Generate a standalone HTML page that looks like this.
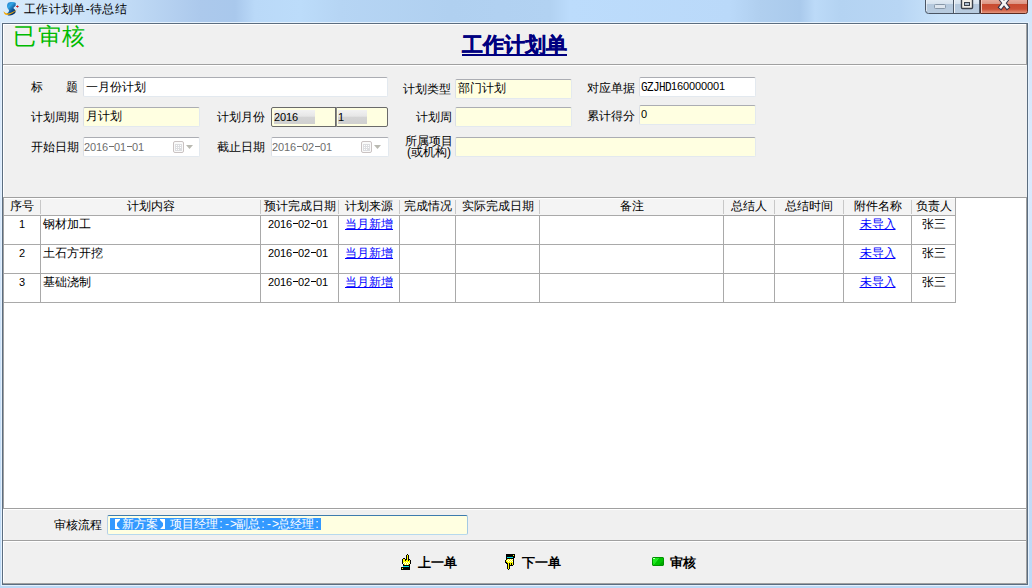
<!DOCTYPE html>
<html><head><meta charset="utf-8">
<style>
*{margin:0;padding:0;box-sizing:border-box}
html,body{width:1032px;height:588px;overflow:hidden}
body{position:relative;background:linear-gradient(#d4e6f9,#dbeafd 30%,#c6def7 70%,#bcd9f6);font-family:"Liberation Sans",sans-serif;font-size:12px;color:#000}
.a{position:absolute}
.t{position:absolute;white-space:nowrap;line-height:12px;font-size:12px}
.m{font-family:"Liberation Mono",monospace;font-size:11px;letter-spacing:-0.6px;transform:scaleY(1.2);transform-origin:0 0}
.tb{position:absolute;border:1px solid;border-color:#abadb3 #e3e9ef #e3e9ef #dbdfe6;border-radius:2px;background:#fff;box-shadow:inset 0 0 0 1px #fff}
.y{background:#ffffe1;box-shadow:none}
.hl{position:absolute;height:1px}
.vl{position:absolute;width:1px}
.n{font-size:11px}
.dg{display:inline-block;width:6px;text-align:center;font-family:"Liberation Sans",sans-serif;font-size:11px}
.lt{display:inline-block;width:6px;text-align:center;font-family:"Liberation Mono",monospace;font-size:11px;transform:scaleY(1.15);transform-origin:50% 2px}
.hy{display:inline-block;width:6px;height:12px;position:relative;vertical-align:top}
.hy::after{content:"";position:absolute;left:1px;top:5px;width:5px;height:1px;background:currentColor}
.hw{display:inline-block;width:6px;text-align:center}
.fw{display:inline-block;width:12px;text-align:center}
.lk{color:#0000ff;text-decoration:underline}
</style></head><body>
<!-- title bar -->
<div class="a" style="left:0;top:0;width:1032px;height:22px;background:linear-gradient(90deg,#d8ebfb 0px,#d2e7fa 60px,#c0daf5 130px,#acc9ec 200px,#a9c8ec 235px,#bad9f8 255px,#bcdcfa 300px,#b6d5f4 340px,#b0d0f0 450px,#b2d2f2 550px,#bcdcfc 570px,#bad9f9 730px,#b0cfef 760px,#aacaec 800px,#bcdaf8 815px,#b4d3f2 840px,#b8d6f4 900px,#c8e2fa 940px,#d2e7fb 1032px)"></div>
<div class="t" style="left:24px;top:3px;font-size:12px;letter-spacing:0.35px">工作计划单-待总结</div>
<!-- frame -->
<div class="vl" style="left:1px;top:22px;height:564px;background:#e4f1fd"></div>
<div class="hl" style="left:1px;top:22px;width:1028px;background:#e4f1fd"></div>
<div class="vl" style="left:1028px;top:22px;height:564px;background:#e4f1fd"></div>
<div class="hl" style="left:1px;top:585px;width:1028px;background:#e4f1fd"></div>
<div class="a" style="left:2px;top:23px;width:1026px;height:562px;border:1px solid #5b6d80;background:#f0f0f0"></div>

<!-- panel 1 -->
<div class="hl" style="left:3px;top:24px;width:1023px;background:#fff"></div>
<div class="vl" style="left:3px;top:24px;height:40px;background:#fff"></div>
<div class="hl" style="left:3px;top:64px;width:1024px;background:#a0a0a0"></div>
<div class="vl" style="left:1026px;top:24px;height:40px;background:#a0a0a0"></div>
<div class="t" style="left:13px;top:25px;font-size:23px;line-height:23px;letter-spacing:1.5px;color:#00bb00;font-weight:300">已审核</div>
<div class="t" style="left:462px;top:34px;font-size:21px;line-height:21px;color:#000080;font-weight:bold;text-decoration:underline;-webkit-text-stroke:0.4px #000080">工作计划单</div>

<!-- panel 2 : form -->
<div class="hl" style="left:3px;top:65px;width:1023px;background:#fff"></div>
<div class="vl" style="left:3px;top:65px;height:132px;background:#fff"></div>

<div class="t" style="left:31px;top:81px">标</div>
<div class="t" style="left:66px;top:81px">题</div>
<div class="tb" style="left:83px;top:77px;width:305px;height:20px"></div>
<div class="t" style="left:86px;top:81px">一月份计划</div>

<div class="t" style="left:403px;top:83px">计划类型</div>
<div class="tb y" style="left:455px;top:79px;width:117px;height:20px"></div>
<div class="t" style="left:458px;top:82px">部门计划</div>

<div class="t" style="left:587px;top:82px">对应单据</div>
<div class="tb" style="left:639px;top:77px;width:117px;height:20px"></div>
<div class="t n" style="left:641px;top:80px"><span class="lt">G</span><span class="lt">Z</span><span class="lt">J</span><span class="lt">H</span><span class="lt">D</span><span class="dg">1</span><span class="dg">6</span><span class="dg">0</span><span class="dg">0</span><span class="dg">0</span><span class="dg">0</span><span class="dg">0</span><span class="dg">0</span><span class="dg">1</span></div>

<div class="t" style="left:31px;top:111px">计划周期</div>
<div class="tb y" style="left:83px;top:107px;width:117px;height:20px"></div>
<div class="t" style="left:86px;top:110px">月计划</div>

<div class="t" style="left:217px;top:111px">计划月份</div>
<div class="a" style="left:271px;top:107px;width:117px;height:20px;border:1px solid #6a6a6a;background:#ffffe1;border-radius:2px"></div>
<div class="a" style="left:335px;top:107px;width:2px;height:20px;border-left:1px solid #6a6a6a;border-right:1px solid #8a8a8a"></div>
<div class="a" style="left:274px;top:110px;width:41px;height:14px;background:linear-gradient(#f2f2f2 0,#e6e6e6 45%,#d4d4d4 50%,#d0d0d0 100%)"></div>
<div class="a" style="left:338px;top:110px;width:29px;height:14px;background:linear-gradient(#f2f2f2 0,#e6e6e6 45%,#d4d4d4 50%,#d0d0d0 100%)"></div>
<div class="t n" style="left:274px;top:111px"><span class="dg">2</span><span class="dg">0</span><span class="dg">1</span><span class="dg">6</span></div>
<div class="t n" style="left:338px;top:111px"><span class="dg">1</span></div>

<div class="t" style="left:416px;top:111px">计划周</div>
<div class="tb y" style="left:455px;top:107px;width:117px;height:20px"></div>

<div class="t" style="left:587px;top:110px">累计得分</div>
<div class="tb y" style="left:639px;top:105px;width:117px;height:20px"></div>
<div class="t n" style="left:641px;top:108px"><span class="dg">0</span></div>

<div class="t" style="left:31px;top:141px">开始日期</div>
<div class="tb" style="left:83px;top:137px;width:117px;height:20px"></div>
<div class="t n" style="left:84px;top:141px;color:#6e6e6e"><span class="dg">2</span><span class="dg">0</span><span class="dg">1</span><span class="dg">6</span><span class="hy"></span><span class="dg">0</span><span class="dg">1</span><span class="hy"></span><span class="dg">0</span><span class="dg">1</span></div>

<div class="t" style="left:217px;top:141px">截止日期</div>
<div class="tb" style="left:271px;top:137px;width:118px;height:20px"></div>
<div class="t n" style="left:272px;top:141px;color:#6e6e6e"><span class="dg">2</span><span class="dg">0</span><span class="dg">1</span><span class="dg">6</span><span class="hy"></span><span class="dg">0</span><span class="dg">2</span><span class="hy"></span><span class="dg">0</span><span class="dg">1</span></div>

<div class="t" style="left:405px;top:136px;line-height:11px">所属项目</div>
<div class="t" style="left:405px;top:147px;line-height:11px"><span class="hw" style="text-align:right">(</span>或机构<span class="hw" style="text-align:left">)</span></div>
<div class="tb y" style="left:455px;top:137px;width:301px;height:20px"></div>

<!-- table area -->
<div class="hl" style="left:3px;top:197px;width:1024px;background:#a0a0a0"></div>
<div class="vl" style="left:3px;top:197px;height:312px;background:#a0a0a0"></div>
<div class="a" style="left:4px;top:198px;width:1022px;height:310px;background:#fff"></div>
<div class="hl" style="left:3px;top:508px;width:1024px;background:#a0a0a0"></div>

<!-- table -->
<div class="a" style="left:4px;top:199px;width:951px;height:16px;background:#f4f4f4"></div>
<div class="hl" style="left:4px;top:215px;width:952px;background:#a9a9a9"></div>
<div class="vl" style="left:40px;top:200px;height:14px;background:#c8c8c8"></div>
<div class="vl" style="left:40px;top:215px;height:87px;background:#a9a9a9"></div>
<div class="vl" style="left:260px;top:200px;height:14px;background:#c8c8c8"></div>
<div class="vl" style="left:260px;top:215px;height:87px;background:#a9a9a9"></div>
<div class="vl" style="left:338px;top:200px;height:14px;background:#c8c8c8"></div>
<div class="vl" style="left:338px;top:215px;height:87px;background:#a9a9a9"></div>
<div class="vl" style="left:399px;top:200px;height:14px;background:#c8c8c8"></div>
<div class="vl" style="left:399px;top:215px;height:87px;background:#a9a9a9"></div>
<div class="vl" style="left:455px;top:200px;height:14px;background:#c8c8c8"></div>
<div class="vl" style="left:455px;top:215px;height:87px;background:#a9a9a9"></div>
<div class="vl" style="left:539px;top:200px;height:14px;background:#c8c8c8"></div>
<div class="vl" style="left:539px;top:215px;height:87px;background:#a9a9a9"></div>
<div class="vl" style="left:723px;top:200px;height:14px;background:#c8c8c8"></div>
<div class="vl" style="left:723px;top:215px;height:87px;background:#a9a9a9"></div>
<div class="vl" style="left:774px;top:200px;height:14px;background:#c8c8c8"></div>
<div class="vl" style="left:774px;top:215px;height:87px;background:#a9a9a9"></div>
<div class="vl" style="left:843px;top:200px;height:14px;background:#c8c8c8"></div>
<div class="vl" style="left:843px;top:215px;height:87px;background:#a9a9a9"></div>
<div class="vl" style="left:911px;top:200px;height:14px;background:#c8c8c8"></div>
<div class="vl" style="left:911px;top:215px;height:87px;background:#a9a9a9"></div>
<div class="vl" style="left:955px;top:198px;height:105px;background:#a9a9a9"></div>
<div class="hl" style="left:4px;top:244px;width:952px;background:#a9a9a9"></div>
<div class="hl" style="left:4px;top:273px;width:952px;background:#a9a9a9"></div>
<div class="hl" style="left:4px;top:302px;width:952px;background:#a9a9a9"></div>
<div class="t" style="left:4px;top:200px;width:36px;text-align:center">序号</div>
<div class="t" style="left:41px;top:200px;width:219px;text-align:center">计划内容</div>
<div class="t" style="left:261px;top:200px;width:77px;text-align:center">预计完成日期</div>
<div class="t" style="left:339px;top:200px;width:60px;text-align:center">计划来源</div>
<div class="t" style="left:400px;top:200px;width:55px;text-align:center">完成情况</div>
<div class="t" style="left:456px;top:200px;width:83px;text-align:center">实际完成日期</div>
<div class="t" style="left:540px;top:200px;width:183px;text-align:center">备注</div>
<div class="t" style="left:724px;top:200px;width:50px;text-align:center">总结人</div>
<div class="t" style="left:775px;top:200px;width:68px;text-align:center">总结时间</div>
<div class="t" style="left:844px;top:200px;width:67px;text-align:center">附件名称</div>
<div class="t" style="left:912px;top:200px;width:43px;text-align:center">负责人</div>
<div class="t n" style="left:19px;top:218px"><span class="dg">1</span></div>
<div class="t" style="left:43px;top:218px">钢材加工</div>
<div class="t n" style="left:268px;top:218px"><span class="dg">2</span><span class="dg">0</span><span class="dg">1</span><span class="dg">6</span><span class="hy"></span><span class="dg">0</span><span class="dg">2</span><span class="hy"></span><span class="dg">0</span><span class="dg">1</span></div>
<div class="t lk" style="left:339px;top:218px;width:60px;text-align:center">当月新增</div>
<div class="t lk" style="left:844px;top:218px;width:67px;text-align:center">未导入</div>
<div class="t" style="left:912px;top:218px;width:43px;text-align:center">张三</div>
<div class="t n" style="left:19px;top:247px"><span class="dg">2</span></div>
<div class="t" style="left:43px;top:247px">土石方开挖</div>
<div class="t n" style="left:268px;top:247px"><span class="dg">2</span><span class="dg">0</span><span class="dg">1</span><span class="dg">6</span><span class="hy"></span><span class="dg">0</span><span class="dg">2</span><span class="hy"></span><span class="dg">0</span><span class="dg">1</span></div>
<div class="t lk" style="left:339px;top:247px;width:60px;text-align:center">当月新增</div>
<div class="t lk" style="left:844px;top:247px;width:67px;text-align:center">未导入</div>
<div class="t" style="left:912px;top:247px;width:43px;text-align:center">张三</div>
<div class="t n" style="left:19px;top:276px"><span class="dg">3</span></div>
<div class="t" style="left:43px;top:276px">基础浇制</div>
<div class="t n" style="left:268px;top:276px"><span class="dg">2</span><span class="dg">0</span><span class="dg">1</span><span class="dg">6</span><span class="hy"></span><span class="dg">0</span><span class="dg">2</span><span class="hy"></span><span class="dg">0</span><span class="dg">1</span></div>
<div class="t lk" style="left:339px;top:276px;width:60px;text-align:center">当月新增</div>
<div class="t lk" style="left:844px;top:276px;width:67px;text-align:center">未导入</div>
<div class="t" style="left:912px;top:276px;width:43px;text-align:center">张三</div>

<!-- panel 4 -->
<div class="hl" style="left:3px;top:509px;width:1023px;background:#fff"></div>
<div class="vl" style="left:3px;top:509px;height:31px;background:#fff"></div>
<div class="hl" style="left:3px;top:540px;width:1024px;background:#a0a0a0"></div>
<div class="t" style="left:54px;top:519px">审核流程</div>
<div class="a" style="left:107px;top:515px;width:361px;height:20px;border:1px solid;border-color:#3d7bad #a4c9e3 #b7d9ed #b5cfe7;border-radius:2px;background:#ffffe1"></div>
<div class="a" style="left:110px;top:518px;width:211px;height:12px;background:#3399ff"></div>
<div class="t" style="left:110px;top:518px;color:#fff"><span class="fw"></span><span class="fw">新</span><span class="fw">方</span><span class="fw">案</span><span class="fw"></span><span class="fw">项</span><span class="fw">目</span><span class="fw">经</span><span class="fw">理</span><span class="hw">:</span><span class="hw">-</span><span class="hw">></span><span class="fw">副</span><span class="fw">总</span><span class="hw">:</span><span class="hw">-</span><span class="hw">></span><span class="fw">总</span><span class="fw">经</span><span class="fw">理</span><span class="hw">:</span></div>

<svg class="a" style="left:110px;top:518px" width="60" height="12" viewBox="0 0 60 12"><path d="M5 1 H10 V2 L7 5 V8 L10 11 H5 Z" fill="#fff"/><path d="M55 1 H50 V2 L53 5 V8 L50 11 H55 Z" fill="#fff"/></svg>
<!-- panel 5 -->
<div class="vl" style="left:1026px;top:197px;height:387px;background:#a0a0a0"></div>
<div class="hl" style="left:3px;top:583px;width:1024px;background:#a0a0a0"></div>
<div class="hl" style="left:3px;top:541px;width:1023px;background:#fff"></div>
<div class="vl" style="left:3px;top:541px;height:41px;background:#fff"></div>
<div class="t" style="left:418px;top:556px;font-weight:bold;font-size:13px;line-height:13px">上一单</div>
<div class="t" style="left:522px;top:556px;font-weight:bold;font-size:13px;line-height:13px">下一单</div>
<div class="t" style="left:670px;top:556px;font-weight:bold;font-size:13px;line-height:13px">审核</div>

<!-- title icon -->
<svg class="a" style="left:0px;top:0px" width="22" height="18" viewBox="0 0 22 18">
<defs><linearGradient id="sg" x1="0" y1="0" x2="0.7" y2="1"><stop offset="0" stop-color="#1a70c0"/><stop offset="0.35" stop-color="#34a8e8"/><stop offset="0.7" stop-color="#0c4f92"/><stop offset="1" stop-color="#062a5a"/></linearGradient></defs>
<path d="M8 3 C10 1.5 14 1.6 15.8 3 L15.6 5.8 C14.6 6.8 13.6 7.4 13.4 8.2 C14.6 9 15.8 10 15.6 12 C15 14.5 11 15.8 8 15.5 L6.6 13.6 C8 12.8 9.2 11.6 9 10.2 C8.2 9.2 7 8.2 7 6.6 C7 5 7.3 3.8 8 3 Z" fill="url(#sg)"/>
<path d="M3.6 11 C3.8 13.6 5 15.2 7.6 15 C11 14.6 14.6 12.2 17.4 9 C14.2 11.6 11 13.1 8 13.4 C6 13.6 4.6 12.8 3.6 11 Z" fill="#f6a800"/>
<path d="M17.4 5 L18.2 6.5 L17.4 8 L16.6 6.5 Z" fill="#c81818"/>
<rect x="16.2" y="6" width="2.4" height="1" fill="#c81818"/>
</svg>
<!-- caption buttons -->
<svg class="a" style="left:925px;top:0px" width="104" height="15" viewBox="0 0 104 15">
<defs>
<linearGradient id="bg1" x1="0" y1="0" x2="0" y2="1"><stop offset="0" stop-color="#e3ecf5"/><stop offset="0.33" stop-color="#d6e2ee"/><stop offset="0.34" stop-color="#b5c8dc"/><stop offset="1" stop-color="#b8cce0"/></linearGradient>
<linearGradient id="bg2" x1="0" y1="0" x2="0" y2="1"><stop offset="0" stop-color="#eab0a2"/><stop offset="0.33" stop-color="#dc9684"/><stop offset="0.36" stop-color="#c84a30"/><stop offset="0.7" stop-color="#cc5238"/><stop offset="1" stop-color="#e8a088"/></linearGradient>
</defs>
<path d="M0.5 -1 L0.5 10.5 Q0.5 13.5 3.5 13.5 L28.5 13.5 L28.5 -1 Z" fill="url(#bg1)" stroke="#4a5564" stroke-width="1"/>
<rect x="28.5" y="-1" width="26" height="14.5" fill="url(#bg1)" stroke="#4a5564" stroke-width="1"/>
<path d="M55.5 -1 L55.5 13.5 L100.5 13.5 Q102.5 13.5 102.5 11.5 L102.5 -1 Z" fill="url(#bg2)" stroke="#5a2a20" stroke-width="1"/>
<line x1="29.5" y1="0" x2="29.5" y2="13" stroke="#f0f4f8" stroke-width="1"/>
<line x1="1.5" y1="0" x2="1.5" y2="11" stroke="#eef3f8" stroke-width="1" opacity="0.7"/>
<line x1="56.5" y1="0" x2="56.5" y2="13" stroke="#f4c8bc" stroke-width="1"/>
<rect x="9.5" y="4.5" width="11" height="4" rx="1" fill="#dde5ee" stroke="#8797a8" stroke-width="1"/>
<rect x="36.5" y="-1" width="11" height="9.5" rx="1" fill="#f2f0ea" stroke="#3a414c" stroke-width="1.4"/>
<rect x="39.5" y="2.5" width="5" height="3" fill="#aebfd0" stroke="#3a414c" stroke-width="1"/>
<g stroke-linecap="square"><path d="M75.8 -1 L82.2 7.2 M82.2 -1 L75.8 7.2" stroke="#34344a" stroke-width="4.6"/><path d="M75.8 -1 L82.2 7.2 M82.2 -1 L75.8 7.2" stroke="#f6f6f6" stroke-width="2.6"/></g>
</svg>
<!-- calendar icons -->
<svg class="a" style="left:173px;top:141px" width="21" height="12" viewBox="0 0 21 12">
<rect x="0.5" y="0.5" width="10" height="11" rx="1.5" fill="#fafafa" stroke="#c9c2c2"/>
<rect x="2" y="3" width="7" height="7" fill="#dcdde0"/>
<g fill="#fff"><rect x="3" y="4" width="1" height="1"/><rect x="5" y="4" width="1" height="1"/><rect x="7" y="4" width="1" height="1"/><rect x="3" y="6" width="1" height="1"/><rect x="5" y="6" width="1" height="1"/><rect x="7" y="6" width="1" height="1"/><rect x="3" y="8" width="1" height="1"/><rect x="5" y="8" width="1" height="1"/></g>
<path d="M13 4 L20 4 L16.5 8 Z" fill="#b9b9b1"/>
</svg>
<svg class="a" style="left:361px;top:141px" width="21" height="12" viewBox="0 0 21 12">
<rect x="0.5" y="0.5" width="10" height="11" rx="1.5" fill="#fafafa" stroke="#c9c2c2"/>
<rect x="2" y="3" width="7" height="7" fill="#dcdde0"/>
<g fill="#fff"><rect x="3" y="4" width="1" height="1"/><rect x="5" y="4" width="1" height="1"/><rect x="7" y="4" width="1" height="1"/><rect x="3" y="6" width="1" height="1"/><rect x="5" y="6" width="1" height="1"/><rect x="7" y="6" width="1" height="1"/><rect x="3" y="8" width="1" height="1"/><rect x="5" y="8" width="1" height="1"/></g>
<path d="M13 4 L20 4 L16.5 8 Z" fill="#b9b9b1"/>
</svg>
<!-- green icon -->
<svg class="a" style="left:652px;top:557px" width="12" height="9" viewBox="0 0 12 9">
<path d="M1 0 H11 L12 1 V8 L11 9 H1 L0 8 V1 Z" fill="#009400"/>
<rect x="1" y="1" width="10" height="7" fill="#00c400"/>
<path d="M1 1 H6 L1 7 Z" fill="#1ef01e"/>
<path d="M6 1 H7.2 L2 7.5 H1 Z" fill="#48ff48" opacity="0.7"/>
<path d="M11 4 V8 H7 Z" fill="#00a400"/>
<rect x="1" y="1" width="2" height="1" fill="#c0ffc0"/>
</svg>
<svg class="a" style="left:398px;top:554px" width="13" height="16" shape-rendering="crispEdges"><rect x="9" y="0" width="1" height="1" fill="#000"/><rect x="8" y="1" width="1" height="1" fill="#000"/><rect x="9" y="1" width="1" height="1" fill="#ffff00"/><rect x="10" y="1" width="1" height="1" fill="#000"/><rect x="8" y="2" width="1" height="1" fill="#000"/><rect x="9" y="2" width="1" height="1" fill="#ffff00"/><rect x="10" y="2" width="1" height="1" fill="#000"/><rect x="8" y="3" width="1" height="1" fill="#000"/><rect x="9" y="3" width="1" height="1" fill="#ffff00"/><rect x="10" y="3" width="1" height="1" fill="#000"/><rect x="5" y="4" width="1" height="1" fill="#000"/><rect x="6" y="4" width="1" height="1" fill="#000"/><rect x="8" y="4" width="1" height="1" fill="#000"/><rect x="9" y="4" width="1" height="1" fill="#ffff00"/><rect x="10" y="4" width="1" height="1" fill="#000"/><rect x="4" y="5" width="1" height="1" fill="#000"/><rect x="5" y="5" width="1" height="1" fill="#ffff00"/><rect x="6" y="5" width="1" height="1" fill="#ffff00"/><rect x="7" y="5" width="1" height="1" fill="#000"/><rect x="8" y="5" width="1" height="1" fill="#000"/><rect x="9" y="5" width="1" height="1" fill="#ffff00"/><rect x="10" y="5" width="1" height="1" fill="#000"/><rect x="11" y="5" width="1" height="1" fill="#000"/><rect x="4" y="6" width="1" height="1" fill="#000"/><rect x="5" y="6" width="1" height="1" fill="#ffff00"/><rect x="6" y="6" width="1" height="1" fill="#ffff00"/><rect x="7" y="6" width="1" height="1" fill="#000"/><rect x="8" y="6" width="1" height="1" fill="#ffff00"/><rect x="9" y="6" width="1" height="1" fill="#ffff00"/><rect x="10" y="6" width="1" height="1" fill="#000"/><rect x="11" y="6" width="1" height="1" fill="#ffff00"/><rect x="12" y="6" width="1" height="1" fill="#000"/><rect x="4" y="7" width="1" height="1" fill="#000"/><rect x="5" y="7" width="1" height="1" fill="#ffff00"/><rect x="6" y="7" width="1" height="1" fill="#ffff00"/><rect x="7" y="7" width="1" height="1" fill="#ffff00"/><rect x="8" y="7" width="1" height="1" fill="#ffff00"/><rect x="9" y="7" width="1" height="1" fill="#ffff00"/><rect x="10" y="7" width="1" height="1" fill="#ffff00"/><rect x="11" y="7" width="1" height="1" fill="#ffff00"/><rect x="12" y="7" width="1" height="1" fill="#000"/><rect x="4" y="8" width="1" height="1" fill="#000"/><rect x="5" y="8" width="1" height="1" fill="#ffff00"/><rect x="6" y="8" width="1" height="1" fill="#fffff0"/><rect x="7" y="8" width="1" height="1" fill="#ffff00"/><rect x="8" y="8" width="1" height="1" fill="#fffff0"/><rect x="9" y="8" width="1" height="1" fill="#ffff00"/><rect x="10" y="8" width="1" height="1" fill="#fffff0"/><rect x="11" y="8" width="1" height="1" fill="#ffff00"/><rect x="12" y="8" width="1" height="1" fill="#000"/><rect x="4" y="9" width="1" height="1" fill="#000"/><rect x="5" y="9" width="1" height="1" fill="#fffff0"/><rect x="6" y="9" width="1" height="1" fill="#ffff00"/><rect x="7" y="9" width="1" height="1" fill="#fffff0"/><rect x="8" y="9" width="1" height="1" fill="#ffff00"/><rect x="9" y="9" width="1" height="1" fill="#fffff0"/><rect x="10" y="9" width="1" height="1" fill="#ffff00"/><rect x="11" y="9" width="1" height="1" fill="#fffff0"/><rect x="12" y="9" width="1" height="1" fill="#000"/><rect x="5" y="10" width="1" height="1" fill="#000"/><rect x="6" y="10" width="1" height="1" fill="#ffff00"/><rect x="7" y="10" width="1" height="1" fill="#fffff0"/><rect x="8" y="10" width="1" height="1" fill="#ffff00"/><rect x="9" y="10" width="1" height="1" fill="#fffff0"/><rect x="10" y="10" width="1" height="1" fill="#ffff00"/><rect x="11" y="10" width="1" height="1" fill="#000"/><rect x="5" y="11" width="1" height="1" fill="#000"/><rect x="6" y="11" width="1" height="1" fill="#000"/><rect x="7" y="11" width="1" height="1" fill="#000"/><rect x="8" y="11" width="1" height="1" fill="#000"/><rect x="9" y="11" width="1" height="1" fill="#000"/><rect x="10" y="11" width="1" height="1" fill="#000"/><rect x="11" y="11" width="1" height="1" fill="#000"/><rect x="5" y="12" width="1" height="1" fill="#00e0e0"/><rect x="6" y="12" width="1" height="1" fill="#00e0e0"/><rect x="7" y="12" width="1" height="1" fill="#00e0e0"/><rect x="8" y="12" width="1" height="1" fill="#00e0e0"/><rect x="9" y="12" width="1" height="1" fill="#00e0e0"/><rect x="10" y="12" width="1" height="1" fill="#00e0e0"/><rect x="11" y="12" width="1" height="1" fill="#000"/><rect x="3" y="13" width="1" height="1" fill="#000"/><rect x="4" y="13" width="1" height="1" fill="#000"/><rect x="5" y="13" width="1" height="1" fill="#000"/><rect x="6" y="13" width="1" height="1" fill="#000"/><rect x="7" y="13" width="1" height="1" fill="#000"/><rect x="8" y="13" width="1" height="1" fill="#000"/><rect x="9" y="13" width="1" height="1" fill="#000"/><rect x="10" y="13" width="1" height="1" fill="#000"/><rect x="11" y="13" width="1" height="1" fill="#000"/><rect x="3" y="14" width="1" height="1" fill="#000"/><rect x="4" y="14" width="1" height="1" fill="#ffff00"/><rect x="5" y="14" width="1" height="1" fill="#000"/><rect x="6" y="14" width="1" height="1" fill="#000"/><rect x="7" y="14" width="1" height="1" fill="#000"/><rect x="8" y="14" width="1" height="1" fill="#000"/><rect x="9" y="14" width="1" height="1" fill="#000"/><rect x="10" y="14" width="1" height="1" fill="#000"/><rect x="11" y="14" width="1" height="1" fill="#000"/><rect x="3" y="15" width="1" height="1" fill="#000"/><rect x="4" y="15" width="1" height="1" fill="#000"/><rect x="5" y="15" width="1" height="1" fill="#000"/><rect x="6" y="15" width="1" height="1" fill="#000"/><rect x="7" y="15" width="1" height="1" fill="#000"/><rect x="8" y="15" width="1" height="1" fill="#000"/><rect x="9" y="15" width="1" height="1" fill="#000"/><rect x="10" y="15" width="1" height="1" fill="#000"/><rect x="11" y="15" width="1" height="1" fill="#000"/></svg>
<svg class="a" style="left:502px;top:554px" width="13" height="16" shape-rendering="crispEdges"><rect x="4" y="0" width="1" height="1" fill="#000"/><rect x="5" y="0" width="1" height="1" fill="#000"/><rect x="6" y="0" width="1" height="1" fill="#000"/><rect x="7" y="0" width="1" height="1" fill="#000"/><rect x="8" y="0" width="1" height="1" fill="#000"/><rect x="9" y="0" width="1" height="1" fill="#000"/><rect x="10" y="0" width="1" height="1" fill="#000"/><rect x="11" y="0" width="1" height="1" fill="#000"/><rect x="12" y="0" width="1" height="1" fill="#000"/><rect x="4" y="1" width="1" height="1" fill="#000"/><rect x="5" y="1" width="1" height="1" fill="#000"/><rect x="6" y="1" width="1" height="1" fill="#000"/><rect x="7" y="1" width="1" height="1" fill="#000"/><rect x="8" y="1" width="1" height="1" fill="#000"/><rect x="9" y="1" width="1" height="1" fill="#000"/><rect x="10" y="1" width="1" height="1" fill="#000"/><rect x="11" y="1" width="1" height="1" fill="#ffff00"/><rect x="12" y="1" width="1" height="1" fill="#000"/><rect x="4" y="2" width="1" height="1" fill="#000"/><rect x="5" y="2" width="1" height="1" fill="#000"/><rect x="6" y="2" width="1" height="1" fill="#000"/><rect x="7" y="2" width="1" height="1" fill="#000"/><rect x="8" y="2" width="1" height="1" fill="#000"/><rect x="9" y="2" width="1" height="1" fill="#000"/><rect x="10" y="2" width="1" height="1" fill="#000"/><rect x="11" y="2" width="1" height="1" fill="#000"/><rect x="12" y="2" width="1" height="1" fill="#000"/><rect x="4" y="3" width="1" height="1" fill="#000"/><rect x="5" y="3" width="1" height="1" fill="#00e0e0"/><rect x="6" y="3" width="1" height="1" fill="#00e0e0"/><rect x="7" y="3" width="1" height="1" fill="#00e0e0"/><rect x="8" y="3" width="1" height="1" fill="#00e0e0"/><rect x="9" y="3" width="1" height="1" fill="#00e0e0"/><rect x="10" y="3" width="1" height="1" fill="#00e0e0"/><rect x="11" y="3" width="1" height="1" fill="#000"/><rect x="12" y="3" width="1" height="1" fill="#000"/><rect x="4" y="4" width="1" height="1" fill="#000"/><rect x="5" y="4" width="1" height="1" fill="#000"/><rect x="6" y="4" width="1" height="1" fill="#000"/><rect x="7" y="4" width="1" height="1" fill="#000"/><rect x="8" y="4" width="1" height="1" fill="#000"/><rect x="9" y="4" width="1" height="1" fill="#000"/><rect x="10" y="4" width="1" height="1" fill="#000"/><rect x="11" y="4" width="1" height="1" fill="#000"/><rect x="4" y="5" width="1" height="1" fill="#000"/><rect x="5" y="5" width="1" height="1" fill="#ffff00"/><rect x="6" y="5" width="1" height="1" fill="#fffff0"/><rect x="7" y="5" width="1" height="1" fill="#ffff00"/><rect x="8" y="5" width="1" height="1" fill="#fffff0"/><rect x="9" y="5" width="1" height="1" fill="#ffff00"/><rect x="10" y="5" width="1" height="1" fill="#fffff0"/><rect x="11" y="5" width="1" height="1" fill="#000"/><rect x="3" y="6" width="1" height="1" fill="#000"/><rect x="4" y="6" width="1" height="1" fill="#ffff00"/><rect x="5" y="6" width="1" height="1" fill="#fffff0"/><rect x="6" y="6" width="1" height="1" fill="#ffff00"/><rect x="7" y="6" width="1" height="1" fill="#fffff0"/><rect x="8" y="6" width="1" height="1" fill="#ffff00"/><rect x="9" y="6" width="1" height="1" fill="#fffff0"/><rect x="10" y="6" width="1" height="1" fill="#ffff00"/><rect x="11" y="6" width="1" height="1" fill="#000"/><rect x="3" y="7" width="1" height="1" fill="#000"/><rect x="4" y="7" width="1" height="1" fill="#ffff00"/><rect x="5" y="7" width="1" height="1" fill="#ffff00"/><rect x="6" y="7" width="1" height="1" fill="#fffff0"/><rect x="7" y="7" width="1" height="1" fill="#ffff00"/><rect x="8" y="7" width="1" height="1" fill="#fffff0"/><rect x="9" y="7" width="1" height="1" fill="#ffff00"/><rect x="10" y="7" width="1" height="1" fill="#fffff0"/><rect x="11" y="7" width="1" height="1" fill="#000"/><rect x="3" y="8" width="1" height="1" fill="#000"/><rect x="4" y="8" width="1" height="1" fill="#000"/><rect x="5" y="8" width="1" height="1" fill="#ffff00"/><rect x="6" y="8" width="1" height="1" fill="#ffff00"/><rect x="7" y="8" width="1" height="1" fill="#ffff00"/><rect x="8" y="8" width="1" height="1" fill="#ffff00"/><rect x="9" y="8" width="1" height="1" fill="#ffff00"/><rect x="10" y="8" width="1" height="1" fill="#ffff00"/><rect x="11" y="8" width="1" height="1" fill="#000"/><rect x="4" y="9" width="1" height="1" fill="#000"/><rect x="5" y="9" width="1" height="1" fill="#000"/><rect x="6" y="9" width="1" height="1" fill="#ffff00"/><rect x="7" y="9" width="1" height="1" fill="#000"/><rect x="8" y="9" width="1" height="1" fill="#ffff00"/><rect x="9" y="9" width="1" height="1" fill="#000"/><rect x="10" y="9" width="1" height="1" fill="#ffff00"/><rect x="11" y="9" width="1" height="1" fill="#000"/><rect x="5" y="10" width="1" height="1" fill="#000"/><rect x="6" y="10" width="1" height="1" fill="#ffff00"/><rect x="7" y="10" width="1" height="1" fill="#000"/><rect x="8" y="10" width="1" height="1" fill="#ffff00"/><rect x="9" y="10" width="1" height="1" fill="#000"/><rect x="10" y="10" width="1" height="1" fill="#ffff00"/><rect x="11" y="10" width="1" height="1" fill="#000"/><rect x="5" y="11" width="1" height="1" fill="#000"/><rect x="6" y="11" width="1" height="1" fill="#ffff00"/><rect x="7" y="11" width="1" height="1" fill="#000"/><rect x="8" y="11" width="1" height="1" fill="#000"/><rect x="9" y="11" width="1" height="1" fill="#000"/><rect x="10" y="11" width="1" height="1" fill="#000"/><rect x="5" y="12" width="1" height="1" fill="#000"/><rect x="6" y="12" width="1" height="1" fill="#ffff00"/><rect x="7" y="12" width="1" height="1" fill="#000"/><rect x="5" y="13" width="1" height="1" fill="#000"/><rect x="6" y="13" width="1" height="1" fill="#ffff00"/><rect x="7" y="13" width="1" height="1" fill="#000"/><rect x="5" y="14" width="1" height="1" fill="#000"/><rect x="6" y="14" width="1" height="1" fill="#ffff00"/><rect x="7" y="14" width="1" height="1" fill="#000"/><rect x="6" y="15" width="1" height="1" fill="#000"/></svg>
</body></html>
